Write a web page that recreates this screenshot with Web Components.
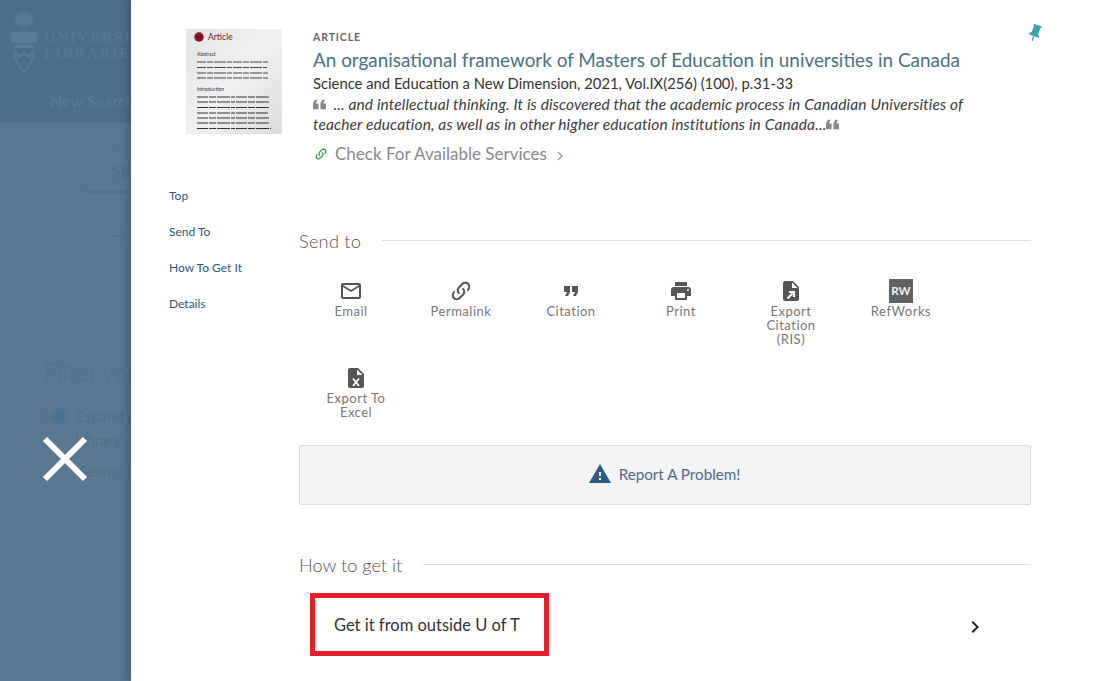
<!DOCTYPE html>
<html><head><meta charset="utf-8"><title>Record</title>
<style>
html,body{margin:0;height:100%;overflow:hidden;background:#fff}
body{font-family:Lato,"Noto Sans",sans-serif}
</style></head><body>
<full-record>
  <ghost-page slot="back"></ghost-page>
  <side-nav slot="nav">
    <nav-link>Top</nav-link><nav-link>Send To</nav-link><nav-link>How To Get It</nav-link><nav-link>Details</nav-link>
  </side-nav>
  <record-head slot="head"></record-head>
  <section-title slot="main" style="letter-spacing:.25px">Send to</section-title>
  <send-actions slot="main"></send-actions>
  <report-bar slot="main"></report-bar>
  <section-title slot="main" class="second">How to get it</section-title>
  <get-it slot="main"></get-it>
</full-record>
<script>
const mk=(name,html)=>{customElements.define(name,class extends HTMLElement{constructor(){super();this.attachShadow({mode:'open'}).innerHTML=html;}});};
mk('full-record',`<style>
:host{display:flex;width:1103px;height:681px;overflow:hidden;position:relative}
.back{width:131px;flex:none;overflow:hidden;background:#5a7792}
.panel{flex:1;background:#fff;box-shadow:-4px 0 7px rgba(30,40,60,.3);display:grid;grid-template-columns:168px 732px;grid-template-rows:auto 1fr;z-index:1}
.head{grid-column:1 / -1;padding:29px 0 0 55px}
.nav{padding:16px 0 0 38px}
.main{padding:58px 0 0 0;min-width:0}
.x{position:absolute;left:42px;top:436px;width:46px;height:46px;z-index:2}
</style>
<div class="back"><slot name="back"></slot></div>
<div class="panel"><div class="head"><slot name="head"></slot></div><div class="nav"><slot name="nav"></slot></div><div class="main"><slot name="main"></slot></div></div>
<svg class="x" viewBox="0 0 46 46"><path d="M3 3L43 43M43 3L3 43" stroke="#fff" stroke-width="6" fill="none"/></svg>`);
mk('ghost-page',`<style>
:host{display:block;width:640px;color:#4d6e8b;font-family:Lato,sans-serif}
.top{height:123px;background:#4c6f8e;box-sizing:border-box;padding:11px 0 0 11px;color:#5a7b97}
.brand{display:flex;gap:7px;height:62px}
.brand b{font:400 15.5px/16px "Liberation Serif",serif;letter-spacing:1.9px;padding-top:18px}
.new{font-weight:700;font-size:16px;color:#587995;margin:18px 0 0 39px}
.box{margin:24px 0 0 86px;width:500px;height:46px;box-sizing:border-box;border:1px solid #587590;border-bottom:2px solid #50708b;padding:13px 0 0 25px;font-size:16px;color:#4f6f8a}
.arrow{margin:37px 0 0 111px;display:block}
.filter{font-weight:300;font-size:24px;margin:115px 0 0 44px;color:#527089}
.row{display:flex;align-items:center;gap:9px;margin:20px 0 0 44px;font-size:15px;color:#4f6f8a;height:20px}
.tog{width:22px;height:9px;border-radius:6px;background:#537690;position:relative}
.tog:after{content:"";position:absolute;right:0;top:-3px;width:14px;height:14px;border-radius:50%;background:#4a7494}
.l{margin:5px 0 0 75px;font-size:15px;color:#4f6f8a}
.s{margin:13px 0 0 79px;font-size:15px;color:#4f6f8a}
</style>
<div class="top"><div class="brand"><svg width="26" height="62" viewBox="0 0 26 62" fill="#5a7b97"><path d="M13 1C18 1 22 4 22 9C22 13 18 15 14 16V21H12V16C8 15 4 13 4 9C4 4 8 1 13 1Z" opacity=".8"/><rect x="0" y="21" width="26" height="11"/><rect x="4" y="34" width="18" height="3"/><path d="M4 41C4 50 8 57 13 60C18 57 22 50 22 41L18 46L13 42L8 46Z" fill="none" stroke="#5a7b97" stroke-width="2.500"/></svg><b>UNIVERSITY<br>LIBRARIES</b></div><div class="new">New Search</div></div>
<div class="box">SEARCH</div>
<svg class="arrow" width="16" height="12" viewBox="0 0 16 12"><path d="M0 6H14M9 1L15 6L9 11" stroke="#54718c" stroke-width="2" fill="none"/></svg>
<div class="filter">Filter your</div>
<div class="row"><span class="tog"></span>Expand results</div>
<div class="l">Library catalogue</div>
<div class="s">Search in</div>`);
mk('side-nav',`<style>:host{display:flex;flex-direction:column;gap:18px}</style><slot></slot>`);
mk('nav-link',`<style>:host{display:block;font-size:12px;line-height:18px;color:#2c5878}</style><slot></slot>`);
mk('record-head',`<style>
:host{display:flex;position:relative;height:142px;color:#333}
.thumb{width:96px;height:105px;flex:none;margin-right:31px}
.txt{flex:1;padding-top:1px}
.type{font-size:10.5px;font-weight:700;letter-spacing:.9px;color:#666;line-height:14px}
h1{margin:3px 0 0;font-size:18.9px;line-height:26px;font-weight:400;color:#4a7180}
.pub{font-size:14.8px;line-height:21px;color:#333}
.sn{font-size:15.5px;font-style:italic;line-height:20px;width:690px;color:#3c3c3c;letter-spacing:.12px}
.q{display:inline-block;width:13px;height:13px;vertical-align:-1px;fill:#888}
.chk{display:flex;align-items:center;margin-top:8px;font-size:17px;color:#8a8a8a;line-height:24px}
.pin{position:absolute;left:839px;top:-6px}
</style>
<svg class="thumb" viewBox="0 0 96 105" preserveAspectRatio="none">
<defs><linearGradient id="g" x1="0" y1="0" x2="1" y2="1"><stop offset="0" stop-color="#e4e4e4"/><stop offset=".5" stop-color="#f0f0f0"/><stop offset="1" stop-color="#dcdcdc"/></linearGradient></defs>
<rect width="96" height="105" fill="url(#g)"/><circle cx="13" cy="8" r="4.7" fill="#7d1420"/>
<text x="22" y="11" font-size="8.5" font-family="Lato,sans-serif" fill="#7d1420">Article</text>
<text x="11" y="27" font-size="5" font-family="Lato,sans-serif" fill="#333">Abstract</text>
<g stroke="#444" stroke-width="1.2" stroke-dasharray="9 1 6 1 12 1 5 1">
<path d="M11 33H83M11 38.500H81M11 44H83M11 49H82"/>
</g>
<text x="11" y="62" font-size="5" font-family="Lato,sans-serif" fill="#333">Introduction</text>
<g stroke="#333" stroke-width="1.2" stroke-dasharray="11 1 7 1 13 1 4 1">
<path d="M11 68H84M11 73H83M11 78.500H83M11 84H82M11 89H83M11 94H83M11 99.500H85"/>
</g></svg>
<div class="txt">
<div class="type">ARTICLE</div>
<h1>An organisational framework of Masters of Education in universities in Canada</h1>
<div class="pub">Science and Education a New Dimension, 2021, Vol.IX(256) (100), p.31-33</div>
<div class="sn"><svg class="q" viewBox="5 7 14 10"><path d="M10,7L8,11H11V17H5V11L7,7H10M18,7L16,11H19V17H13V11L15,7H18Z"/></svg>&nbsp; ... and intellectual thinking. It is discovered that the academic process in Canadian Universities of teacher education, as well as in other higher education institutions in Canada...<svg class="q" viewBox="5 7 14 10"><path d="M10,7L8,11H11V17H5V11L7,7H10M18,7L16,11H19V17H13V11L15,7H18Z"/></svg></div>
<div class="chk"><svg width="14" height="14" viewBox="0 0 24 24" fill="#2f8a2f" style="margin:0 7px 0 1px"><path d="M10.59,13.41C11,13.8 11,14.44 10.59,14.83C10.2,15.22 9.56,15.22 9.17,14.83C7.22,12.88 7.22,9.71 9.17,7.76V7.76L12.71,4.22C14.66,2.27 17.83,2.27 19.78,4.22C21.73,6.17 21.73,9.34 19.78,11.29L18.29,12.78C18.3,11.96 18.17,11.14 17.89,10.36L18.36,9.88C19.54,8.71 19.54,6.81 18.36,5.64C17.19,4.46 15.29,4.46 14.12,5.64L10.59,9.17C9.41,10.34 9.41,12.24 10.59,13.41M13.41,9.17C13.8,8.78 14.44,8.78 14.83,9.17C16.78,11.12 16.78,14.29 14.83,16.24V16.24L11.29,19.78C9.34,21.73 6.17,21.73 4.22,19.78C2.27,17.83 2.27,14.66 4.22,12.71L5.71,11.22C5.7,12.04 5.83,12.86 6.11,13.65L5.64,14.12C4.46,15.29 4.46,17.19 5.64,18.36C6.81,19.54 8.71,19.54 9.88,18.36L13.41,14.83C14.59,13.66 14.59,11.76 13.41,10.59C13,10.2 13,9.56 13.41,9.17Z"/></svg>Check For Available Services<svg width="18" height="18" viewBox="0 0 24 24" fill="#93a6b5" style="margin:3px 0 0 4px"><path d="M8.59,16.58L13.17,12L8.59,7.41L10,6L16,12L10,18L8.59,16.58Z"/></svg></div>
</div>
<svg class="pin" width="20" height="20" viewBox="0 0 24 24" fill="#3fa3ac"><path transform="rotate(20 12 12)" d="M16,12V4H17V2H7V4H8V12L6,14V16H11.2V22H12.8V16H18V14L16,12Z"/></svg>`);
mk('section-title',`<style>
:host{display:flex;align-items:center;gap:21px;font-size:18.2px;font-weight:300;color:#555;line-height:24px;height:24px}
:host(.second){margin-top:48px}
i{flex:1;height:1px;background:#ddd;margin-top:-1px}
</style><span><slot></slot></span><i></i>`);
const ic={
mail:'<svg width="24" height="24" viewBox="0 0 24 24"><path d="M20 4H4c-1.1 0-1.99.9-1.99 2L2 18c0 1.1.9 2 2 2h16c1.1 0 2-.9 2-2V6c0-1.1-.9-2-2-2zm0 14H4V8l8 5 8-5v10zm-8-7L4 6h16l-8 5z"/></svg>',
link:'<svg width="24" height="24" viewBox="0 0 24 24"><path d="M10.59,13.41C11,13.8 11,14.44 10.59,14.83C10.2,15.22 9.56,15.22 9.17,14.83C7.22,12.88 7.22,9.71 9.17,7.76V7.76L12.71,4.22C14.66,2.27 17.83,2.27 19.78,4.22C21.73,6.17 21.73,9.34 19.78,11.29L18.29,12.78C18.3,11.96 18.17,11.14 17.89,10.36L18.36,9.88C19.54,8.71 19.54,6.81 18.36,5.64C17.19,4.46 15.29,4.46 14.12,5.64L10.59,9.17C9.41,10.34 9.41,12.24 10.59,13.41M13.41,9.17C13.8,8.78 14.44,8.78 14.83,9.17C16.78,11.12 16.78,14.29 14.83,16.24V16.24L11.29,19.78C9.34,21.73 6.17,21.73 4.22,19.78C2.27,17.83 2.27,14.66 4.22,12.71L5.71,11.22C5.7,12.04 5.83,12.86 6.11,13.65L5.64,14.12C4.46,15.29 4.46,17.19 5.64,18.36C6.81,19.54 8.71,19.54 9.88,18.36L13.41,14.83C14.59,13.66 14.59,11.76 13.41,10.59C13,10.2 13,9.56 13.41,9.17Z"/></svg>',
cite:'<svg width="24" height="24" viewBox="0 0 24 24"><path d="M14,17H17L19,13V7H13V13H16M6,17H9L11,13V7H5V13H8L6,17Z"/></svg>',
print:'<svg width="24" height="24" viewBox="0 0 24 24"><path d="M18,3H6V7H18M19,12A1,1 0 0,1 18,11A1,1 0 0,1 19,10A1,1 0 0,1 20,11A1,1 0 0,1 19,12M16,19H8V14H16M19,8H5A3,3 0 0,0 2,11V17H6V21H18V17H22V11A3,3 0 0,0 19,8Z"/></svg>',
ris:'<svg width="24" height="24" viewBox="0 0 24 24"><path d="M13,9V3.5L18.5,9M6,2C4.89,2 4,2.89 4,4V20A2,2 0 0,0 6,22H18A2,2 0 0,0 20,20V8L14,2H6Z"/><path d="M8.500 19.500L13.500 14.500M10 13H15V18" stroke="#fff" stroke-width="2.200" fill="none"/></svg>',
xls:'<svg width="24" height="24" viewBox="0 0 24 24"><path d="M13,9V3.5L18.5,9M6,2C4.89,2 4,2.89 4,4V20A2,2 0 0,0 6,22H18A2,2 0 0,0 20,20V8L14,2H6Z"/><path d="M9 12.500L15 20M15 12.500L9 20" stroke="#fff" stroke-width="1.800" fill="none"/></svg>',
rw:'<span class="rw">RW</span>'};
const items=[['mail','Email'],['link','Permalink'],['cite','Citation'],['print','Print'],['ris','Export Citation (RIS)'],['rw','RefWorks'],['xls','Export To Excel']];
mk('send-actions',`<style>
:host{display:flex;flex-wrap:wrap;width:680px;margin:26px 0 0 -3px}
.a{width:110px;display:flex;flex-direction:column;align-items:center;text-align:center;fill:#555;font-size:13px;line-height:14px;letter-spacing:.5px;color:#777;padding-bottom:20px}
.a span.t{width:70px;margin-top:1px}
.ic{height:24px;display:flex;align-items:center;justify-content:center}
.rw{display:flex;width:24px;height:24px;background:#616161;color:#f2f2f2;font-size:11.5px;font-weight:700;align-items:center;justify-content:center;letter-spacing:.2px}
.a:last-child{margin-left:5px}
</style>${items.map(([k,t])=>`<div class="a"><div class="ic">${ic[k]}</div><span class="t">${t}</span></div>`).join('')}`);
mk('report-bar',`<style>
:host{display:flex;align-items:center;justify-content:center;height:60px;box-sizing:border-box;background:#f4f4f4;border:1px solid #ddd;border-radius:2px;margin-top:6px;color:#4d6b85;font-size:15.2px;gap:7px;padding:0 2px 2px 0}
</style><svg width="24" height="24" viewBox="0 0 24 24" fill="#2c5e85"><path d="M13,14H11V10H13M13,18H11V16H13M1,21H23L12,2L1,21Z"/></svg><span>Report A Problem!</span>`);
mk('get-it',`<style>
:host{display:flex;align-items:center;justify-content:space-between;margin:16px 0 0 11px;height:63px;color:#333;font-size:16.5px}
.b{box-sizing:border-box;width:239px;height:63px;border:5px solid #e61e2b;padding-left:19px;display:flex;align-items:center}
svg{margin-right:44px;margin-top:4px}
</style><div class="b">Get it from outside U of T</div><svg width="24" height="24" viewBox="0 0 24 24" fill="#222"><path d="M8.59,16.58L13.17,12L8.59,7.41L10,6L16,12L10,18L8.59,16.58Z"/></svg>`);
</script>
</body></html>
